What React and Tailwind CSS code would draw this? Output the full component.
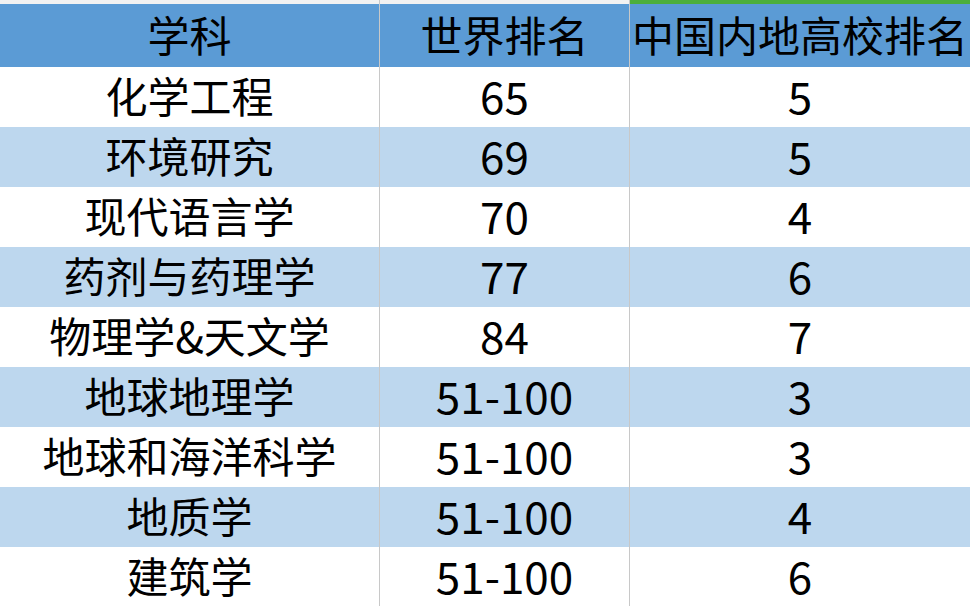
const rows = [
  ['化学工程', '65', '5'],
  ['环境研究', '69', '5'],
  ['现代语言学', '70', '4'],
  ['药剂与药理学', '77', '6'],
  ['物理学&天文学', '84', '7'],
  ['地球地理学', '51-100', '3'],
  ['地球和海洋科学', '51-100', '3'],
  ['地质学', '51-100', '4'],
  ['建筑学', '51-100', '6'],
];

const font = { fontFamily: '"Noto Sans CJK SC", "Noto Sans", sans-serif' };

function Cell({ children, last, num }) {
  return (
    <div
      className={
        'flex items-center justify-center pb-[4px] leading-none text-black ' +
        (num ? 'text-[44px] ' : 'text-[42px] ') +
        (last ? '' : 'border-r border-[#c8c8c8]')
      }
    >
      {children}
    </div>
  );
}

export default function App() {
  return (
    <div className="h-[606px] w-[970px] overflow-hidden bg-white" style={font}>
      <div className="grid h-[4px] grid-cols-[380px_250px_340px] bg-[#f2f2f2]">
        <div className="border-r border-[#c8c8c8]" />
        <div className="border-r border-[#c8c8c8]" />
        <div className="bg-[#4caf3c]" />
      </div>
      <div className="grid h-[63px] grid-cols-[380px_250px_340px] bg-[#5b9bd5]">
        <Cell>学科</Cell>
        <Cell>世界排名</Cell>
        <Cell last>中国内地高校排名</Cell>
      </div>
      {rows.map((r, i) => (
        <div
          key={i}
          className={
            'grid h-[60px] grid-cols-[380px_250px_340px] ' +
            (i % 2 === 1 ? 'bg-[#bdd7ee]' : 'bg-white')
          }
        >
          <Cell>{r[0]}</Cell>
          <Cell num>{r[1]}</Cell>
          <Cell num last>{r[2]}</Cell>
        </div>
      ))}
    </div>
  );
}
